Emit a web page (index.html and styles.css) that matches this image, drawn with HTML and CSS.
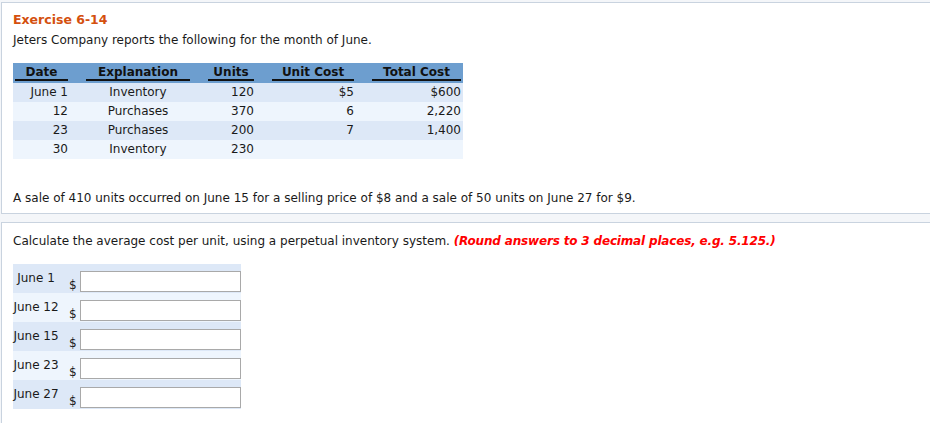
FILE: index.html
```html
<!DOCTYPE html>
<html>
<head>
<meta charset="utf-8">
<link rel="stylesheet" href="styles.css">
</head>
<body>
<div class="page">
  <section class="panel panel-top">
    <h2 class="title">Exercise 6-14</h2>
    <p class="intro">Jeters Company reports the following for the month of June.</p>
    <table class="data">
      <thead>
        <tr>
          <th class="c-date"><span>Date</span></th>
          <th class="c-exp"><span>Explanation</span></th>
          <th class="c-units"><span>Units</span></th>
          <th class="c-uc"><span>Unit Cost</span></th>
          <th class="c-tc"><span>Total Cost</span></th>
        </tr>
      </thead>
      <tbody>
        <tr class="odd"><td class="c-date">June 1</td><td class="c-exp">Inventory</td><td class="c-units">120</td><td class="c-uc">$5</td><td class="c-tc">$600</td></tr>
        <tr class="even"><td class="c-date">12</td><td class="c-exp">Purchases</td><td class="c-units">370</td><td class="c-uc">6</td><td class="c-tc">2,220</td></tr>
        <tr class="odd"><td class="c-date">23</td><td class="c-exp">Purchases</td><td class="c-units">200</td><td class="c-uc">7</td><td class="c-tc">1,400</td></tr>
        <tr class="even"><td class="c-date">30</td><td class="c-exp">Inventory</td><td class="c-units">230</td><td class="c-uc"></td><td class="c-tc"></td></tr>
      </tbody>
    </table>
    <p class="sale">A sale of 410 units occurred on June 15 for a selling price of $8 and a sale of 50 units on June 27 for $9.</p>
  </section>
  <section class="panel panel-bottom">
    <p class="question">Calculate the average cost per unit, using a perpetual inventory system. <em class="hint">(Round answers to 3 decimal places, e.g. 5.125.)</em></p>
    <div class="answers">
      <div class="arow odd"><span class="alabel">June 1</span><span class="dollar">$</span><input class="ainput" type="text"></div>
      <div class="arow even"><span class="alabel">June 12</span><span class="dollar">$</span><input class="ainput" type="text"></div>
      <div class="arow odd"><span class="alabel">June 15</span><span class="dollar">$</span><input class="ainput" type="text"></div>
      <div class="arow even"><span class="alabel">June 23</span><span class="dollar">$</span><input class="ainput" type="text"></div>
      <div class="arow odd"><span class="alabel">June 27</span><span class="dollar">$</span><input class="ainput" type="text"></div>
    </div>
  </section>
</div>
</body>
</html>
```
FILE: styles.css
```css
html, body {
  margin: 0;
  padding: 0;
  background: #f4f6f9;
}
body {
  font-family: "DejaVu Sans", Verdana, sans-serif;
  font-size: 12px;
  color: #1a1a1a;
}
.page {
  padding: 2px 0 0 1px;
  height: 421px;
  overflow: hidden;
}
.panel {
  background: #fff;
  border: 1px solid #c9d3df;
  border-right: none;
  padding: 0 0 0 11px;
}
.panel-top {
  height: 210px;
}
.panel-bottom {
  margin-top: 8px;
  border-bottom: none;
  height: 220px;
}
.title {
  margin: 0;
  padding-top: 9px;
  font-size: 12.5px;
  line-height: 16px;
  font-weight: bold;
  color: #d4500e;
}
.intro {
  margin: 5px 0 0;
  line-height: 15px;
}
.data {
  margin-top: 15px;
  border-collapse: collapse;
  width: 450px;
}
.data th {
  background: #6d9ecf;
  height: 20px;
  padding: 0 9px;
  vertical-align: top;
  font-weight: bold;
  color: #111;
}
.data th span {
  display: block;
  padding-top: 2px;
  line-height: 14px;
  border-bottom: 2px solid #111;
  text-align: center;
}
.data th.c-date { padding-left: 2px; width: 53px; }
.data th.c-exp { width: 104px; }
.data th.c-units { width: 46px; }
.data th.c-uc { width: 82px; }
.data th.c-tc { padding-right: 2px; width: 89px; }
.data td {
  height: 19px;
  padding: 0 9px;
  line-height: 19px;
}
.data td.c-date { padding-left: 2px; text-align: right; }
.data td.c-exp { text-align: center; }
.data td.c-units, .data td.c-uc { text-align: right; }
.data td.c-tc { padding-right: 2px; text-align: right; }
.odd { background: #dde8f7; }
.even { background: #eef5fd; }
.sale {
  margin: 32px 0 0;
  line-height: 15px;
}
.question {
  margin: 0;
  padding-top: 11px;
  line-height: 15px;
}
.hint {
  color: #f00;
  font-weight: bold;
  font-style: italic;
  letter-spacing: -0.17px;
}
.answers {
  margin-top: 15px;
  width: 228px;
}
.arow {
  display: flex;
  height: 29px;
}
.alabel {
  width: 46px;
  padding-top: 7px;
  text-align: center;
  white-space: nowrap;
  line-height: 14px;
}
.dollar {
  align-self: flex-end;
  margin-left: 10px;
  padding-bottom: 1px;
  line-height: 14px;
  width: 11px;
}
.ainput {
  align-self: flex-end;
  margin: 0 0 1px;
  width: 161px;
  height: 21px;
  box-sizing: border-box;
  border: 1px solid #a9a9a9;
  padding: 0;
  background: #fff;
}
```
